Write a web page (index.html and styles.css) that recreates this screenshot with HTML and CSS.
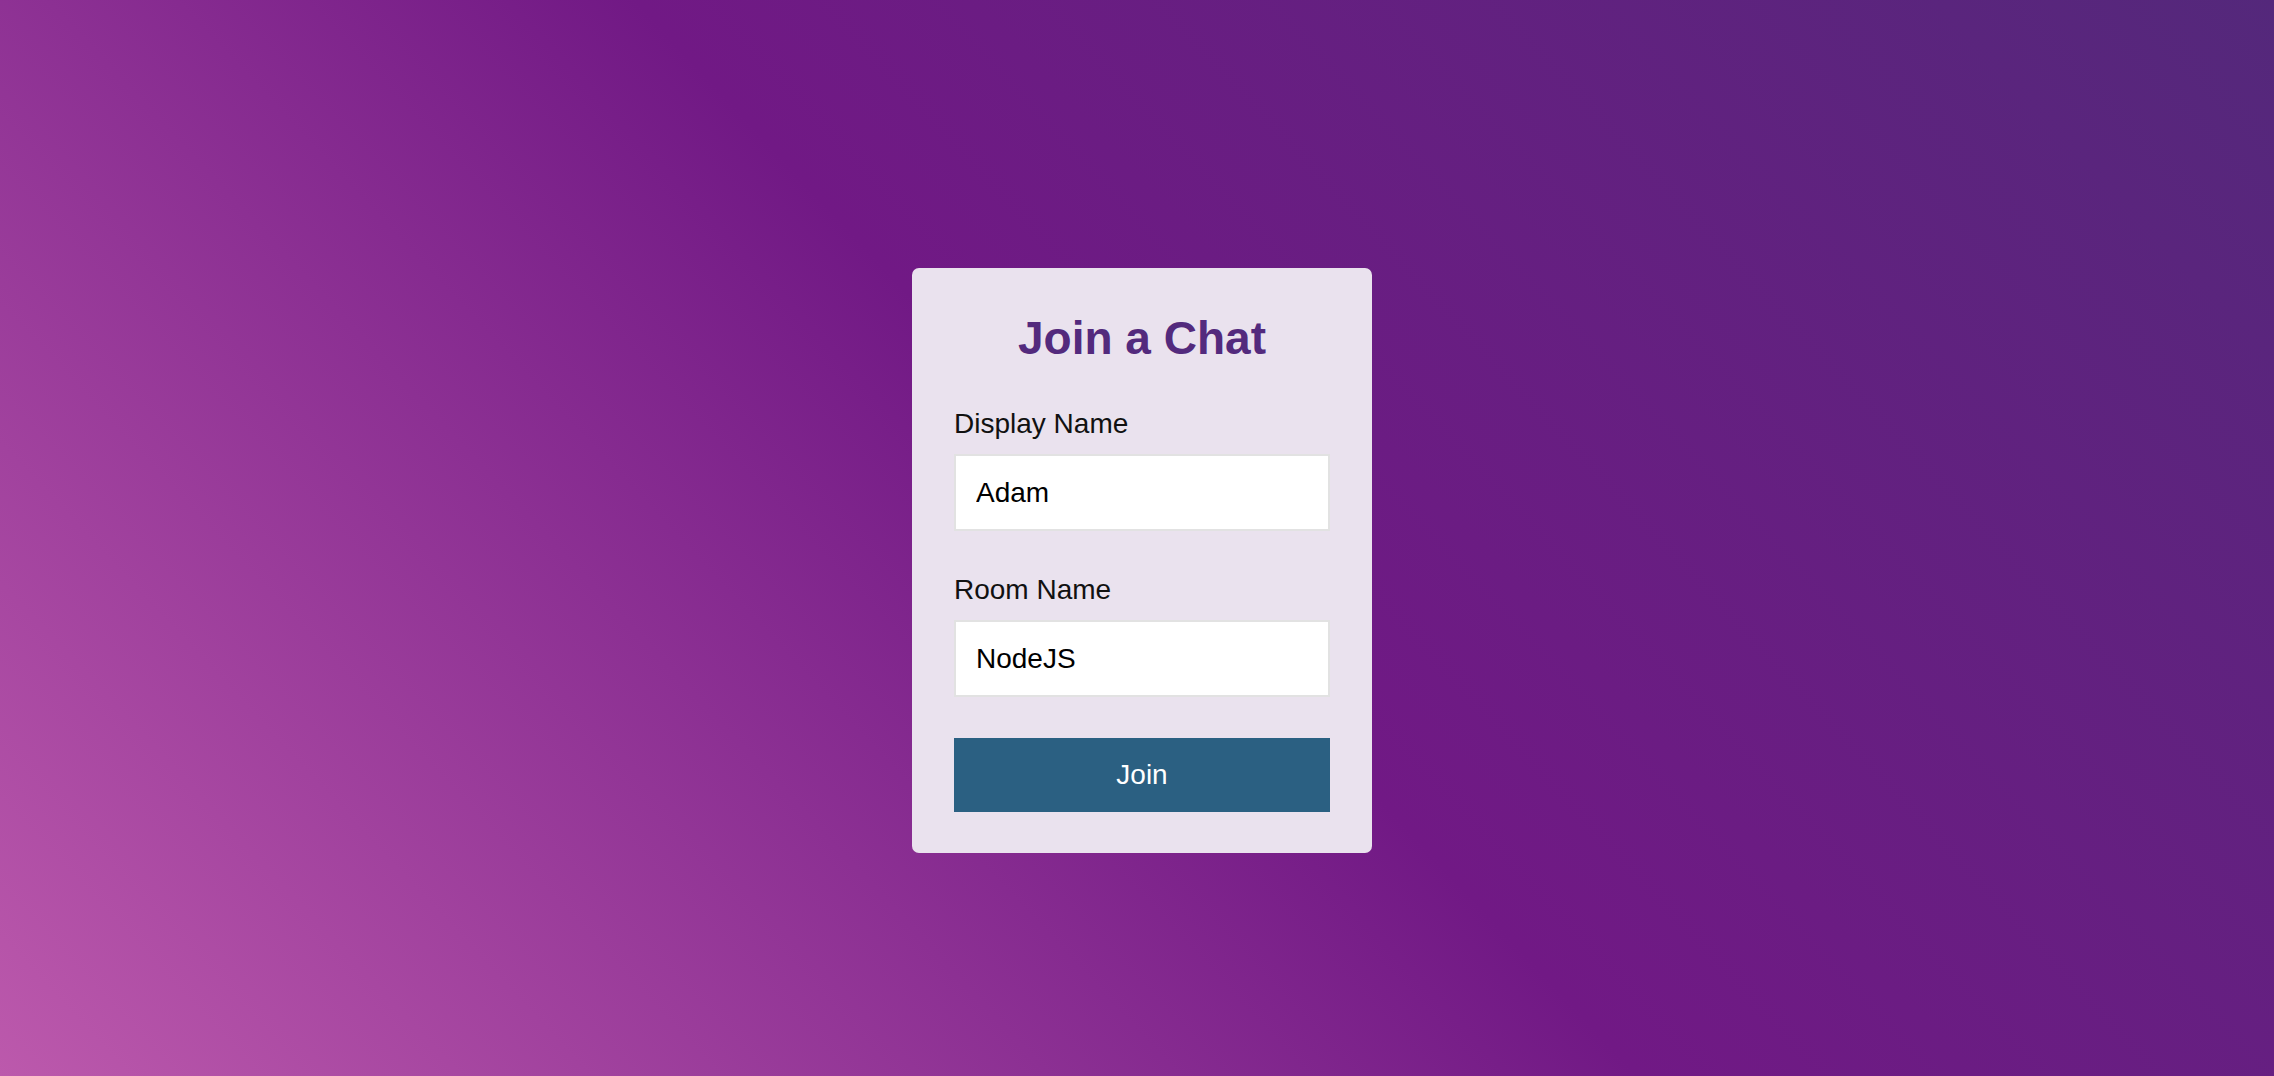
FILE: index.html
```html
<!DOCTYPE html>
<html lang="en">
<head>
<meta charset="utf-8">
<title>Join a Chat</title>
<link rel="stylesheet" href="styles.css">
</head>
<body>
<main class="page">
  <form class="card">
    <h1 class="title">Join a Chat</h1>
    <label class="label" for="name">Display Name</label>
    <input class="field" id="name" type="text" value="Adam">
    <label class="label label-room" for="room">Room Name</label>
    <input class="field" id="room" type="text" value="NodeJS">
    <button class="btn" type="button">Join</button>
  </form>
</main>
</body>
</html>
```
FILE: styles.css
```css
html, body {
  margin: 0;
  padding: 0;
  height: 100%;
}
body {
  font-family: "Liberation Sans", Arial, sans-serif;
  background: linear-gradient(47deg, #bc59ac 0%, #711985 50%, #54287b 100%);
  background-attachment: fixed;
  min-height: 1076px;
}
.page {
  display: flex;
  justify-content: center;
  padding: 268px 0 0 10px;
}
.card {
  width: 460px;
  box-sizing: border-box;
  padding: 42px 42px 41px;
  background: #eae2ee;
  border-radius: 7px;
  display: flex;
  flex-direction: column;
}
.title {
  margin: 0 0 41px;
  font-size: 46px;
  line-height: 56px;
  font-weight: 700;
  color: #532a7d;
  text-align: center;
}
.label {
  font-size: 28px;
  line-height: 34px;
  color: #111;
  margin-bottom: 13px;
}
.label-room {
  margin-top: 42px;
}
.field {
  box-sizing: border-box;
  height: 77px;
  width: 100%;
  border: 2px solid #e2e2e2;
  background: #fff;
  padding: 0 20px;
  font-family: "Liberation Sans", Arial, sans-serif;
  font-size: 28px;
  color: #000;
  outline: none;
  margin: 0;
}
.btn {
  margin-top: 41px;
  height: 74px;
  width: 100%;
  border: none;
  background: #2b6082;
  color: #fff;
  font-family: "Liberation Sans", Arial, sans-serif;
  font-size: 28px;
  cursor: pointer;
}
```
